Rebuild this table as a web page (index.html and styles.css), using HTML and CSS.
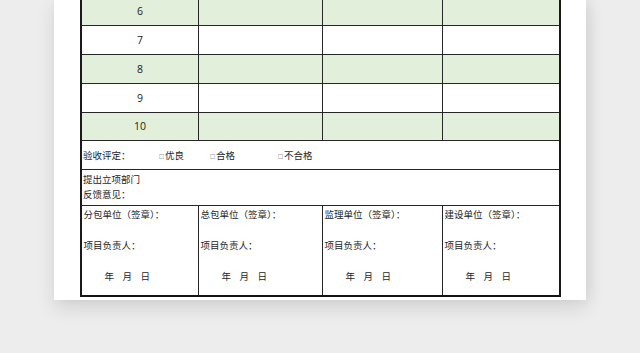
FILE: index.html
```html
<!DOCTYPE html>
<html lang="zh-CN">
<head>
<meta charset="utf-8">
<title>验收表</title>
<link rel="stylesheet" href="styles.css">
</head>
<body>
<div class="paper">
  <div class="sheet">
    <div class="row grid green h29"><div class="cell num">6</div><div class="cell"></div><div class="cell"></div><div class="cell"></div></div>
    <div class="row grid h29"><div class="cell num">7</div><div class="cell"></div><div class="cell"></div><div class="cell"></div></div>
    <div class="row grid green h29"><div class="cell num">8</div><div class="cell"></div><div class="cell"></div><div class="cell"></div></div>
    <div class="row grid h29"><div class="cell num">9</div><div class="cell"></div><div class="cell"></div><div class="cell"></div></div>
    <div class="row grid green h28"><div class="cell num">10</div><div class="cell"></div><div class="cell"></div><div class="cell"></div></div>
    <div class="row eval h29">
      <span>验收评定：</span>
      <span><span class="box">□</span>优良</span>
      <span><span class="box">□</span>合格</span>
      <span><span class="box">□</span>不合格</span>
    </div>
    <div class="row propose">
      <div>提出立项部门</div>
      <div>反馈意见：</div>
    </div>
    <div class="row grid sign">
      <div class="cell scell"><div>分包单位（签章）：</div><div>项目负责人：</div><div class="date"><span>年</span><span>月</span><span>日</span></div></div>
      <div class="cell scell"><div>总包单位（签章）：</div><div>项目负责人：</div><div class="date"><span>年</span><span>月</span><span>日</span></div></div>
      <div class="cell scell"><div>监理单位（签章）：</div><div>项目负责人：</div><div class="date"><span>年</span><span>月</span><span>日</span></div></div>
      <div class="cell scell"><div>建设单位（签章）：</div><div>项目负责人：</div><div class="date"><span>年</span><span>月</span><span>日</span></div></div>
    </div>
  </div>
</div>
</body>
</html>
```
FILE: styles.css
```css
html, body {
  margin: 0;
  padding: 0;
}
body {
  background: #ededed;
  width: 640px;
  height: 353px;
  overflow: hidden;
  font-family: "Noto Sans CJK SC", "Liberation Sans", sans-serif;
  color: #1e1e1e;
}
.paper {
  margin: -3px 0 0 54px;
  width: 532px;
  box-sizing: border-box;
  padding: 0 25px 3px 26px;
  background: #fff;
  box-shadow: 0 8px 18px rgba(0, 0, 0, 0.11), 6px 0 12px rgba(0, 0, 0, 0.04);
}
.sheet {
  border-left: 2px solid #1a1a1a;
  border-right: 2px solid #1a1a1a;
  border-bottom: 2px solid #141414;
}
.row {
  border-bottom: 1px solid #262626;
  box-sizing: border-box;
}
.grid {
  display: grid;
  grid-template-columns: 116px 124px 120px 117px;
}
.green {
  background: #e2efda;
}
.h29 { height: 29px; }
.h28 { height: 28px; }
.cell {
  box-sizing: border-box;
}
.cell + .cell {
  border-left: 1px solid #262626;
}
.num {
  display: flex;
  align-items: center;
  justify-content: center;
  font-family: "Open Sans", "Liberation Sans", sans-serif;
  font-size: 10.5px;
  color: #222;
  padding-bottom: 1px;
}
.eval {
  display: grid;
  grid-template-columns: 76px 51px 68px auto;
  align-items: center;
  padding-left: 1px;
  font-size: 9.5px;
}
.box {
  font-size: 5px;
  margin-right: 1px;
  vertical-align: 1px;
}
.propose {
  height: 36px;
  padding: 2px 0 0 1px;
  font-size: 9.5px;
  line-height: 14.7px;
}
.sign {
  height: 89px;
  border-bottom: none;
}
.scell {
  display: flex;
  flex-direction: column;
  gap: 17px;
  padding: 1px 0 0 1.5px;
  font-size: 9.5px;
  line-height: 14px;
}
.date {
  display: flex;
  gap: 8.5px;
  padding-left: 21px;
}
```
